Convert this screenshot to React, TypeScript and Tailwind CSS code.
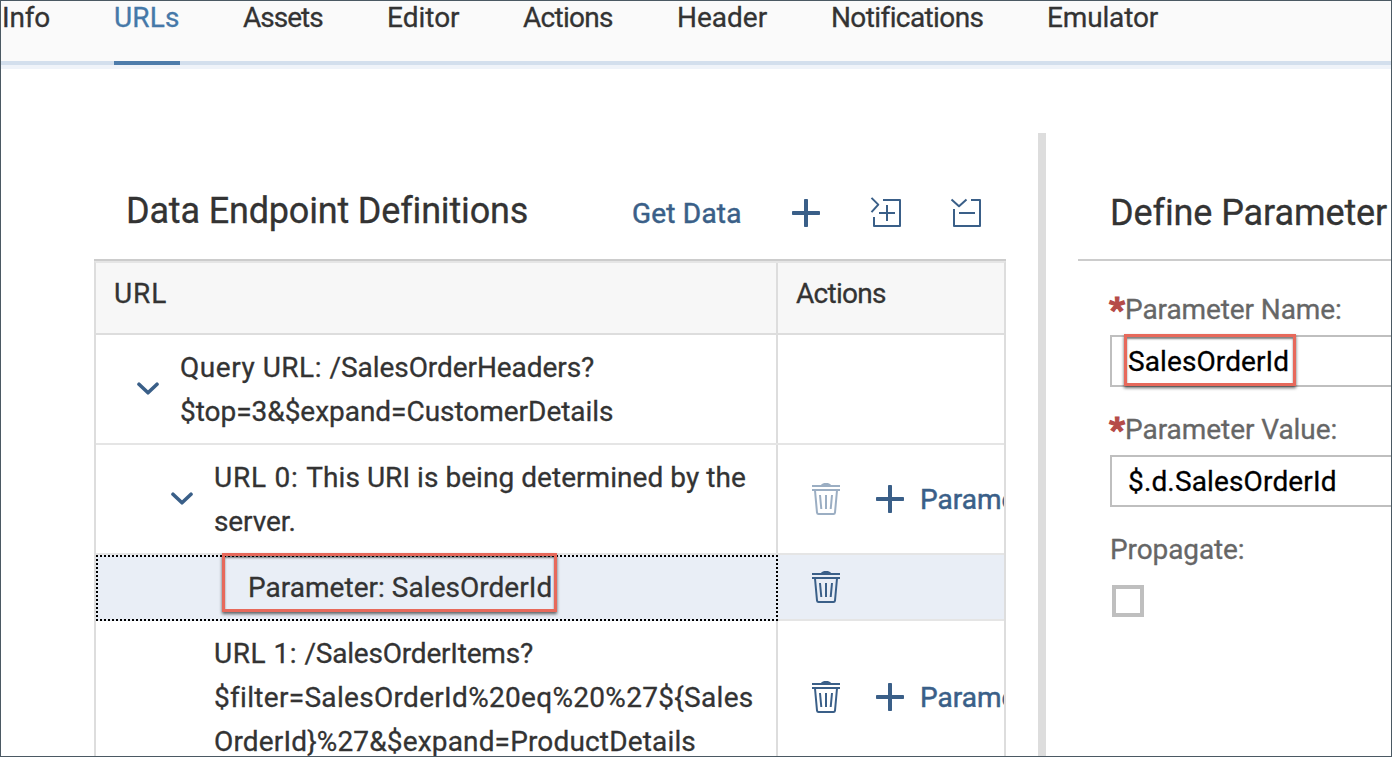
import React from "react";

const tabs = [
  { label: "Info", cls: "w-[112px] tracking-[-0.2px]" },
  { label: "URLs", cls: "w-[129px] tracking-[0.2px]", active: true },
  { label: "Assets", cls: "w-[144px] tracking-[-1px]" },
  { label: "Editor", cls: "w-[136px]" },
  { label: "Actions", cls: "w-[154px] tracking-[-0.7px]" },
  { label: "Header", cls: "w-[154px]" },
  { label: "Notifications", cls: "w-[216px] tracking-[-0.6px]" },
  { label: "Emulator", cls: "w-[130px] tracking-[-0.15px]" },
];

function Plus() {
  return (
    <svg width="28" height="28" viewBox="0 0 28 28" className="shrink-0" fill="currentColor">
      <rect x="0" y="12" width="28" height="4" rx="0.8" />
      <rect x="12" y="0" width="4" height="28" rx="0.8" />
    </svg>
  );
}

function ExpandIcon() {
  return (
    <svg width="32" height="32" viewBox="0 0 32 32" className="shrink-0" fill="none" stroke="currentColor" strokeWidth="2" strokeLinejoin="round">
      <path d="M1.5 0.9L8.3 7.6L1.5 15.2M13 3H30V29H4V20M9 16H25M17 8V24" />
    </svg>
  );
}

function CollapseIcon() {
  return (
    <svg width="32" height="32" viewBox="0 0 32 32" className="shrink-0" fill="none" stroke="currentColor" strokeWidth="2" strokeLinejoin="round">
      <path d="M1.5 2.5L9 9.3L16.5 2.5M21 3H30V29H4V12M9 16H25" />
    </svg>
  );
}

function Trash({ disabled = false }: { disabled?: boolean }) {
  return (
    <svg width="28" height="32" viewBox="0 0 28 32" className={disabled ? "shrink-0 opacity-50" : "shrink-0"} fill="none" stroke="currentColor" strokeWidth="2">
      <path d="M8.5 2.5C10 0.3 11.5 0 14 0S18 0.3 19.5 2.5Z" fill="currentColor" stroke="none" />
      <path d="M0 3H28M0 7H28" />
      <path d="M3 7.5L5 29.5Q5.2 31 6.5 31H21.5Q22.8 31 23 29.5L25 7.5" />
      <path d="M8 12L9.3 26M14 12V26M20 12L18.7 26" strokeWidth="2" />
    </svg>
  );
}

function Chevron() {
  return (
    <svg width="22" height="14" viewBox="0 0 22 14" className="block shrink-0" fill="none" stroke="currentColor" strokeWidth="3.6" strokeLinecap="round" strokeLinejoin="round">
      <path d="M2 2.2L11 10.8L20 2.2" />
    </svg>
  );
}

function Required() {
  return (
    <span className="-ml-px -mt-px w-[15px] text-[34px] font-black tracking-[-1px] text-[#b64b48] [-webkit-text-stroke:1.2px]">*</span>
  );
}

function AddParameter() {
  return (
    <div className="ml-9 flex items-center text-[#3a5f88]">
      <Plus />
      <span className="ml-4 pt-0.5 [-webkit-text-stroke:0.5px]">Parameter</span>
    </div>
  );
}

function ActionCell({ children }: { children?: React.ReactNode }) {
  return <div className="flex min-w-0 flex-1 items-center overflow-hidden pl-[34px] text-[#3a5f88]">{children}</div>;
}

export default function App() {
  return (
    <div className="flex h-[757px] w-[1392px] flex-col overflow-hidden border border-[#4b5963] bg-white font-['Roboto',sans-serif] text-[28px] leading-[44px] text-[#333333] [-webkit-text-stroke:0.3px]">
      <nav className="flex h-[68px] shrink-0 border-b-4 border-[#eff3f9] bg-[#fafafa]">
        <div className="flex flex-1 border-b-4 border-[#d3dfed] pl-px">
          {tabs.map((t) => (
            <div key={t.label} className={`relative shrink-0 whitespace-nowrap pt-px leading-8 ${t.cls} ${t.active ? "text-[#4578a8]" : ""}`}>
              {t.label}
              {t.active && <span className="absolute left-0 top-[60px] h-1 w-[66px] bg-[#4d7cab]" />}
            </div>
          ))}
        </div>
      </nav>

      <main className="flex min-h-0 flex-1 pt-16">
        <section className="ml-[93px] flex w-[912px] shrink-0 flex-col overflow-hidden">
          <header className="flex h-[126px] shrink-0 items-center pl-8 pt-[34px] text-[#3a5f88]">
            <h1 className="w-[506px] -translate-y-0.5 whitespace-nowrap text-[36px] tracking-[-0.17px] text-[#333333]">Data Endpoint Definitions</h1>
            <span className="w-[160px] whitespace-nowrap pt-0.5 tracking-[0.2px] [-webkit-text-stroke:0.5px]">Get Data</span>
            <Plus />
            <span className="ml-[50px]"><ExpandIcon /></span>
            <span className="ml-12"><CollapseIcon /></span>
          </header>

          <div className="flex min-h-0 flex-1 flex-col border-t-2 border-[#cccccc]">
            <div className="flex min-h-0 flex-1 flex-col border-x-2 border-t-2 border-x-[#dddddd] border-t-[#e5e5e5]">
              <div className="flex h-[72px] shrink-0 border-b-2 border-[#dddddd] bg-[#f7f7f7]">
                <div className="w-[682px] border-r-2 border-[#dddddd] pl-[18px] pt-[9px] tracking-[0.9px]">URL</div>
                <div className="pl-[18px] pt-[9px] tracking-[-0.7px]">Actions</div>
              </div>

              <div className="flex h-[110px] shrink-0 border-b-2 border-[#e5e5e5]">
                <div className="flex w-[682px] shrink-0 items-center border-r-2 border-[#dddddd] pl-[41px]">
                  <span className="text-[#3a5f88]"><Chevron /></span>
                  <div className="ml-[21px] whitespace-nowrap pt-0.5">
                    <div className="tracking-[-0.07px]"><span className="tracking-[0.53px]">Query URL: </span>/SalesOrderHeaders?</div>
                    <div className="tracking-[-0.03px]">$top=3&amp;$expand=CustomerDetails</div>
                  </div>
                </div>
                <ActionCell />
              </div>

              <div className="flex h-[110px] shrink-0 border-b-2 border-[#e5e5e5]">
                <div className="flex w-[682px] shrink-0 items-center border-r-2 border-[#dddddd] pl-[75px]">
                  <span className="text-[#3a5f88]"><Chevron /></span>
                  <div className="ml-[21px] whitespace-nowrap pt-0.5">
                    <div className="tracking-[0.05px]"><span className="tracking-[0.77px]">URL 0: </span>This URI is being determined by the</div>
                    <div className="tracking-[-0.1px]">server.</div>
                  </div>
                </div>
                <ActionCell>
                  <Trash disabled />
                  <AddParameter />
                </ActionCell>
              </div>

              <div className="flex h-[66px] shrink-0 bg-[#e9eef6]">
                <div className="relative flex w-[682px] shrink-0 items-center border-2 border-dotted border-black pl-[150px] tracking-[0.03px]">
                  Parameter: SalesOrderId
                  <span className="absolute left-[124px] top-[-4px] h-[59px] w-[335px] border-[3px] border-[#e7695b] shadow-[0_2px_3px_rgba(0,0,0,0.6),inset_0_2px_2px_rgba(0,0,0,0.5)]" />
                </div>
                <div className="flex min-w-0 flex-1 border-b-2 border-[#e5e5e5]">
                  <ActionCell><Trash /></ActionCell>
                </div>
              </div>

              <div className="flex h-[152px] shrink-0">
                <div className="flex w-[682px] shrink-0 items-center border-r-2 border-[#dddddd] pl-[118px]">
                  <div className="whitespace-nowrap pt-0.5">
                    <div className="tracking-[-0.2px]"><span className="tracking-[0.5px]">URL 1: </span>/SalesOrderItems?</div>
                    <div className="tracking-[0.31px]">{"$filter=SalesOrderId%20eq%20%27${Sales"}</div>
                    <div className="tracking-[0.16px]">{"OrderId}%27&$expand=ProductDetails"}</div>
                  </div>
                </div>
                <ActionCell>
                  <Trash />
                  <AddParameter />
                </ActionCell>
              </div>
            </div>
          </div>
        </section>

        <div className="ml-8 w-2 shrink-0 bg-[#dddddd]" />

        <aside className="ml-8 min-w-0 flex-1 overflow-hidden whitespace-nowrap">
          <h2 className="h-32 border-b-2 border-[#cccccc] pl-8 pt-[58px] text-[36px] tracking-[-0.1px]">Define Parameter</h2>
          <div className="pl-8 text-[#666666]">
            <div className="flex h-[74px] pt-[27px]">
              <Required />
              <span className="ml-px tracking-[-0.1px]">Parameter Name:</span>
            </div>
            <div className="relative flex h-[52px] items-center border-2 border-r-0 border-[#bfbfbf] pl-4 pt-0.5 tracking-[0.1px] text-black">
              SalesOrderId
              <span className="absolute left-3 top-[-3px] h-[52px] w-[172px] border-[3px] border-[#e7695b] shadow-[0_2px_3px_rgba(0,0,0,0.6),inset_0_2px_2px_rgba(0,0,0,0.5)]" />
            </div>
            <div className="flex h-[68px] pt-[21px]">
              <Required />
              <span className="ml-px tracking-[-0.05px]">Parameter Value:</span>
            </div>
            <div className="flex h-[52px] items-center border-2 border-r-0 border-[#bfbfbf] pl-4 pt-0.5 tracking-[0.15px] text-black">$.d.SalesOrderId</div>
            <div className="h-[78px] pt-[21px] tracking-[-0.1px]">Propagate:</div>
            <div className="ml-0.5 size-8 border-4 border-[#bfbfbf]" />
          </div>
        </aside>
      </main>
    </div>
  );
}
